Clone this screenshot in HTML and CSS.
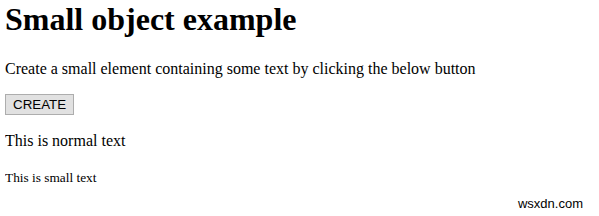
FILE: index.html
```html
<!DOCTYPE html>
<html>
<head>
<meta charset="utf-8">
<link rel="stylesheet" href="styles.css">
</head>
<body>
<h1 class="title">Small object example</h1>
<p class="intro">Create a small element containing some text by clicking the below button</p>
<button class="create">CREATE</button>
<p class="normal">This is normal text</p>
<p class="smallp"><small>This is small text</small></p>
<div class="mark">wsxdn.com</div>
</body>
</html>
```
FILE: styles.css
```css
html, body {
  background: #fff;
}
body {
  margin: 0 5px;
  font-family: "Liberation Serif", "Times New Roman", serif;
  font-size: 16px;
  color: #000;
  position: relative;
  height: 216px;
  overflow: hidden;
}
.title {
  font-size: 32px;
  font-weight: bold;
  margin: 0;
  padding-top: 1px;
}
.intro {
  margin: 22px 0 16px;
}
.create {
  font-family: "Liberation Sans", Arial, sans-serif;
  font-size: 13.33px;
  padding: 2px 7px;
  background: #e1e1e1;
  border: 1px solid #adadad;
  border-radius: 0;
  color: #000;
}
.normal {
  margin: 17px 0 16px;
}
.smallp {
  margin: 18px 0 0;
}
.mark {
  position: absolute;
  right: 11px;
  bottom: 5px;
  font-family: "Liberation Sans", Arial, sans-serif;
  font-size: 13px;
  color: #000;
}
```
